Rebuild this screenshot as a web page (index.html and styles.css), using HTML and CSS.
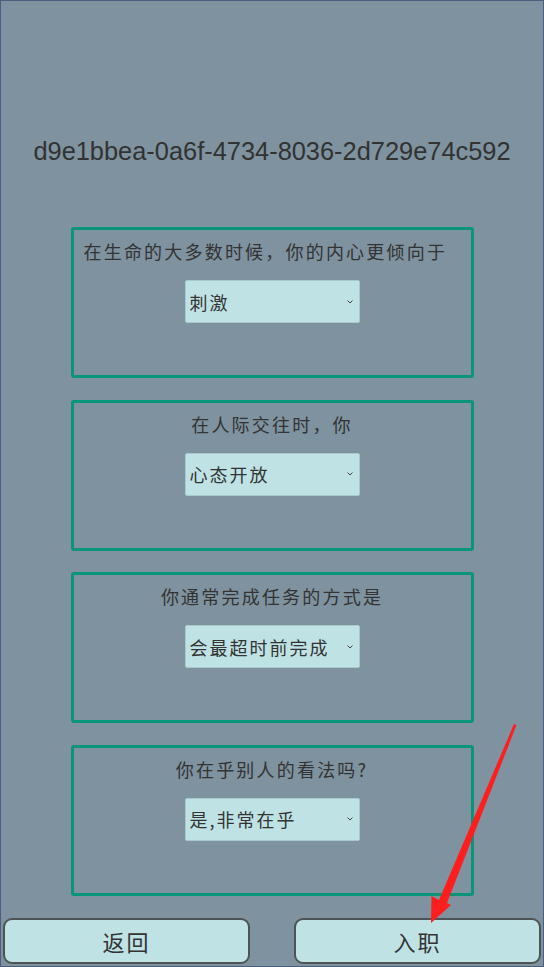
FILE: index.html
```html
<!DOCTYPE html>
<html lang="zh-CN">
<head>
  <meta charset="UTF-8">
  <title>入职问卷</title>
  <link rel="stylesheet" href="styles.css">
</head>
<body>

  <div class="tela">
    <h1 class="id">d9e1bbea-0a6f-4734-8036-2d729e74c592</h1>

    <div class="perguntas">
      <div class="card">
        <p class="pergunta esquerda">在生命的大多数时候，你的内心更倾向于</p>
        <div class="select">
          <span>刺激</span>
          <svg width="6" height="4" viewBox="0 0 6 4"><path d="M0.5 0.5 L3 3 L5.5 0.5" fill="none" stroke="#444" stroke-width="1"/></svg>
        </div>
      </div>

      <div class="card">
        <p class="pergunta">在人际交往时，你</p>
        <div class="select">
          <span>心态开放</span>
          <svg width="6" height="4" viewBox="0 0 6 4"><path d="M0.5 0.5 L3 3 L5.5 0.5" fill="none" stroke="#444" stroke-width="1"/></svg>
        </div>
      </div>

      <div class="card">
        <p class="pergunta">你通常完成任务的方式是</p>
        <div class="select">
          <span>会最超时前完成</span>
          <svg width="6" height="4" viewBox="0 0 6 4"><path d="M0.5 0.5 L3 3 L5.5 0.5" fill="none" stroke="#444" stroke-width="1"/></svg>
        </div>
      </div>

      <div class="card">
        <p class="pergunta">你在乎别人的看法吗?</p>
        <div class="select">
          <span>是,非常在乎</span>
          <svg width="6" height="4" viewBox="0 0 6 4"><path d="M0.5 0.5 L3 3 L5.5 0.5" fill="none" stroke="#444" stroke-width="1"/></svg>
        </div>
      </div>
    </div>

    <div class="botoes">
      <button class="btn">返回</button>
      <button class="btn">入职</button>
    </div>

    <!-- seta de anotação -->
    <svg class="seta" width="544" height="967" viewBox="0 0 544 967">
      <polygon points="514,724 516.5,725 447,903 451,905 431,923 431.5,896 439,900" fill="#ff1e1e"/>
    </svg>
  </div>

</body>
</html>
```

FILE: styles.css
```css
body {
  margin: 0;
  font-family: "Liberation Sans", "Noto Sans CJK SC", sans-serif;
}
.tela {
  position: relative;
  width: 544px;
  height: 967px;
  box-sizing: border-box;
  border: 1px solid #4a5f80;
  background-color: #7e929f;
  padding-top: 136px;
  display: flex;
  flex-direction: column;
}
.id {
  margin: 0;
  font-size: 25.4px;
  font-weight: normal;
  line-height: 28px;
  color: #323232;
  text-align: center;
}
.perguntas {
  margin-top: 62px;
  display: flex;
  flex-direction: column;
  gap: 21.5px;
}
.card {
  width: 403px;
  height: 151px;
  margin: 0 auto;
  box-sizing: border-box;
  border: 3px solid #0a9478;
  border-radius: 3px;
  padding-top: 9px;
  display: flex;
  flex-direction: column;
  align-items: center;
}
.pergunta {
  margin: 0;
  font-family: "Noto Sans CJK SC", sans-serif;
  font-size: 18px;
  line-height: 24px;
  color: #333;
  text-align: center;
  letter-spacing: 2.2px;
}
.pergunta.esquerda {
  align-self: flex-start;
  padding-left: 10px;
}
.select {
  margin-top: 17px;
  width: 175px;
  height: 43px;
  box-sizing: border-box;
  background-color: #bfe3e4;
  border: 1px solid #a9c9cc;
  border-radius: 2px;
  padding: 0 6px 0 4px;
  display: flex;
  align-items: center;
  justify-content: space-between;
  font-family: "Noto Sans CJK SC", sans-serif;
  font-size: 18px;
  letter-spacing: 2px;
  color: #333;
}
.botoes {
  margin-top: auto;
  padding: 0 2px 2px;
  display: flex;
  justify-content: space-between;
}
.btn {
  width: 247px;
  height: 46px;
  background-color: #bfe3e4;
  border: 2px solid #4e5456;
  border-radius: 9px;
  font-family: "Noto Sans CJK SC", sans-serif;
  font-size: 22px;
  color: #333;
  letter-spacing: 2px;
  cursor: pointer;
}
.seta {
  position: absolute;
  top: -1px;
  left: -1px;
  pointer-events: none;
}
```
